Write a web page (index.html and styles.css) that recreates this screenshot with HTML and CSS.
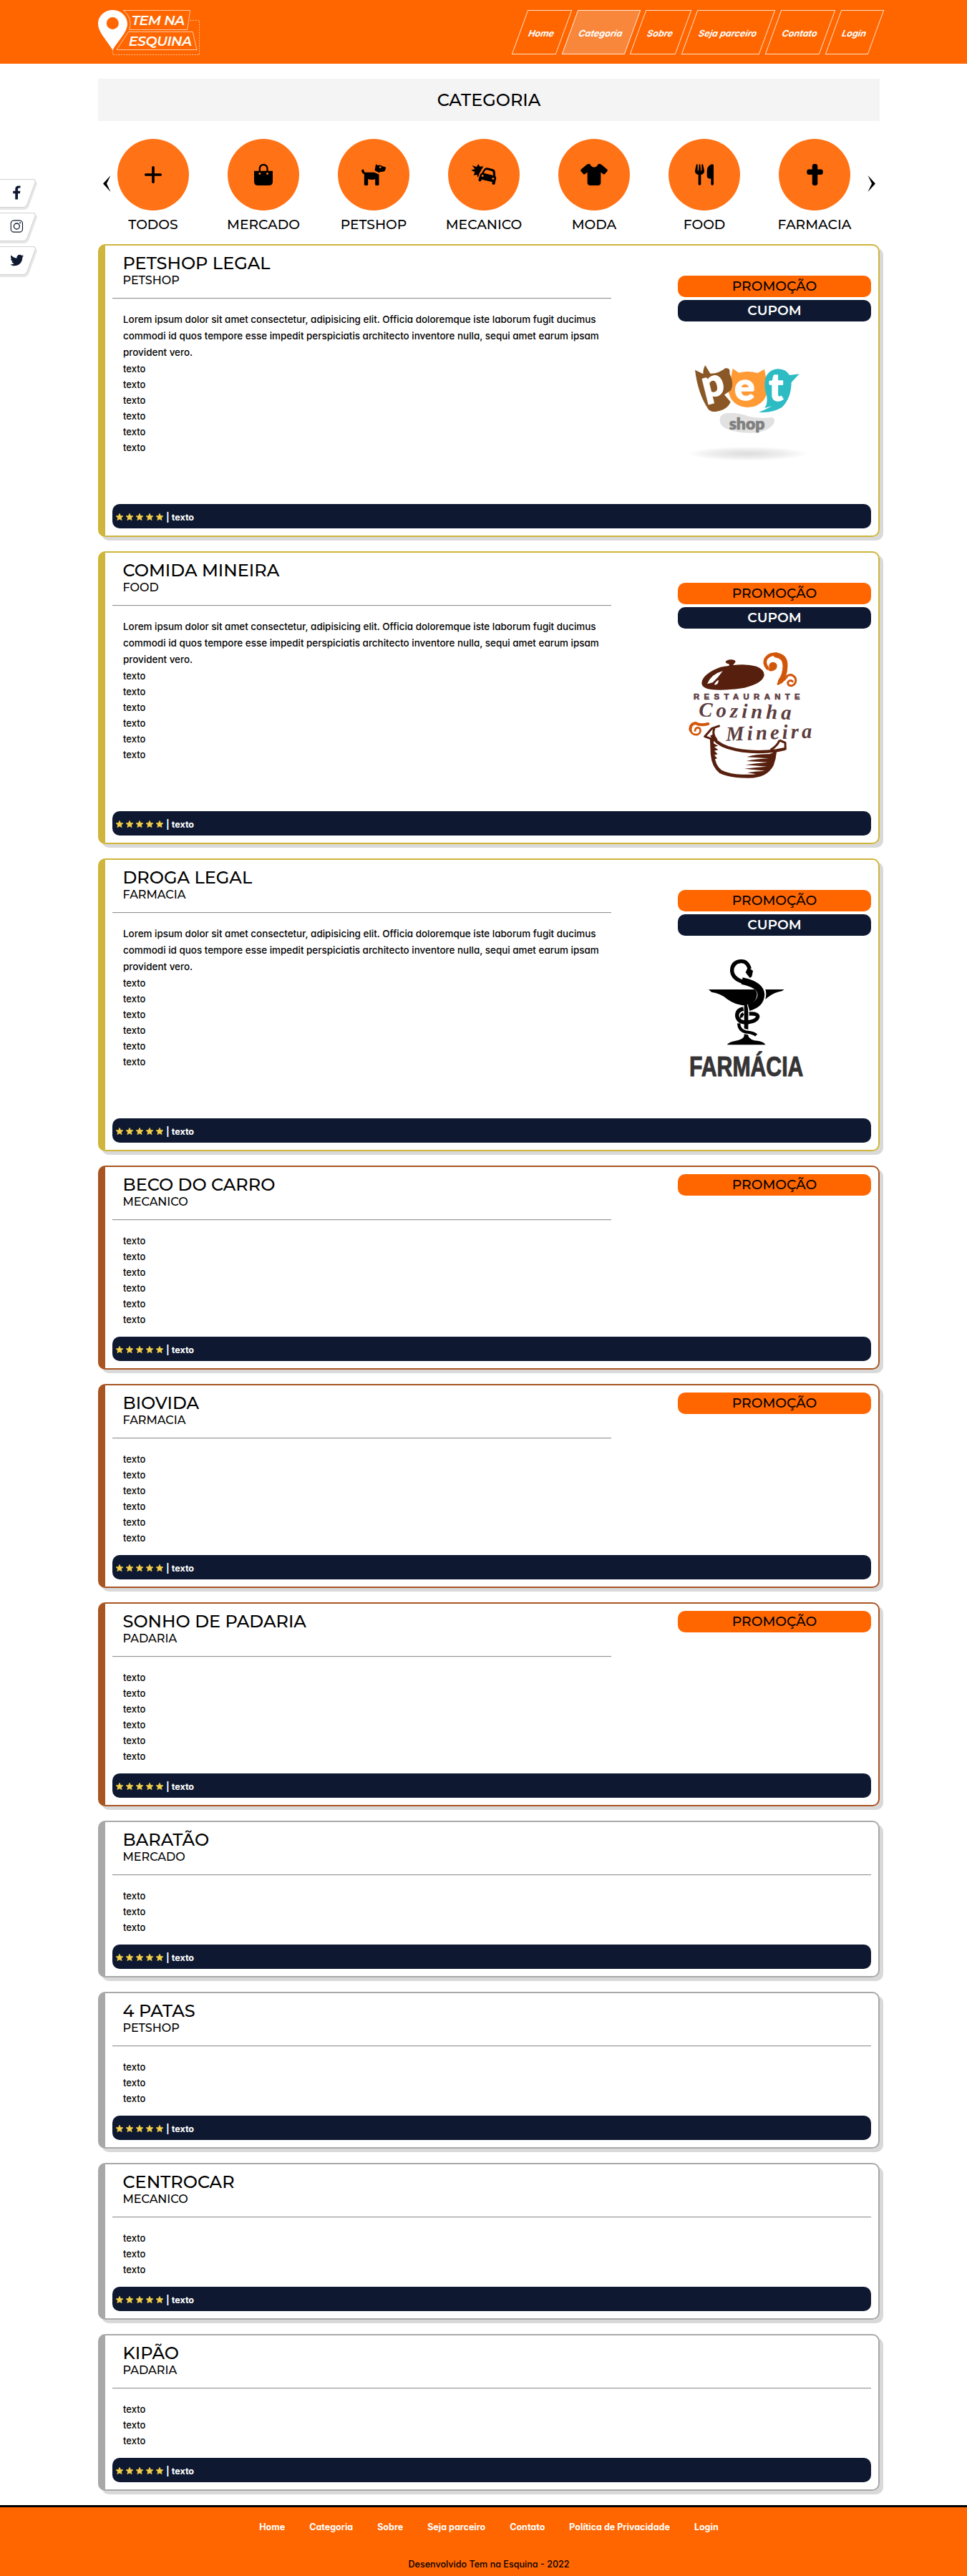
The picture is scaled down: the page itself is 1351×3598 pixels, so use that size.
FILE: index.html
```
<!DOCTYPE html>
<html lang="pt-BR">
<head>
<meta charset="utf-8">
<title>Tem na Esquina - Categoria</title>
<link rel="stylesheet" href="styles.css">
</head>
<body>
<svg class="defs" width="0" height="0">
  <symbol id="star" viewBox="1 1 22 21"><path d="M12 1l3.300 7 7.700.9-5.700 5.200 1.600 7.600L12 17.900l-6.900 3.800 1.600-7.600L1 8.900 8.700 8z" stroke="#f2cf4a" stroke-width="1.500" stroke-linejoin="round"/></symbol>
  <symbol id="stars" viewBox="0 0 70 12">
    <use href="#star" x="0" y="1" width="10" height="10"/><use href="#star" x="14" y="1" width="10" height="10"/><use href="#star" x="28" y="1" width="10" height="10"/><use href="#star" x="42" y="1" width="10" height="10"/><use href="#star" x="56" y="1" width="10" height="10"/>
  </symbol>
</svg>

<header class="header">
  <div class="header-inner">
    <svg class="logo" viewBox="411 42 432 192">
      <path fill="#fff" fill-rule="evenodd" d="M472 42c-34 0-61 26-61 58 0 34 34 66 61 110 27-44 62-76 62-110 0-32-28-58-62-58zM472 72a25.500 25.500 0 1 1 0 51 25.500 25.500 0 0 1 0-51z"/>
      <g fill="none" stroke="#fff" stroke-opacity=".75" stroke-width="2.500">
        <path d="M517 43.500H797L785 124.500H542Q558 75 517 43.500z"/>
        <path d="M538 133.500H808L825 208.500H489z"/>
        <path stroke-dasharray="6 5" d="M796 85.500H835.500V229.500H473V208"/>
      </g>
      <text x="551" y="105" textLength="224">TEM NA</text>
      <text x="539" y="192" textLength="266">ESQUINA</text>
    </svg>
    <nav class="nav">
      <a class="nav-home"><span>Home</span></a>
      <a class="nav-categoria active"><span>Categoria</span></a>
      <a class="nav-sobre"><span>Sobre</span></a>
      <a class="nav-parceiro"><span>Seja parceiro</span></a>
      <a class="nav-contato"><span>Contato</span></a>
      <a class="nav-login"><span>Login</span></a>
    </nav>
  </div>
</header>

<aside class="social">
  <a><svg width="12" height="20" viewBox="0 0 320 512"><path d="M279.140 288l14.220-92.660h-88.910v-60.130c0-25.350 12.420-50.060 52.240-50.060h40.420V6.260S260.430 0 225.360 0c-73.220 0-121.080 44.380-121.080 124.720v70.620H22.890V288h81.390v224h100.170V288z"/></svg></a>
  <a><svg width="18" height="18" viewBox="0 0 18 18"><g fill="none" stroke="#0e1831" stroke-width="1.300"><rect x=".8" y=".8" width="16.400" height="16.400" rx="4.500"/><circle cx="9" cy="9" r="4"/></g><circle cx="13.700" cy="4.300" r="1"/></svg></a>
  <a><svg width="19" height="19" viewBox="0 0 512 512"><path d="M459.370 151.716c.325 4.548.325 9.097.325 13.645 0 138.720-105.583 298.558-298.558 298.558-59.452 0-114.680-17.219-161.137-47.106 8.447.974 16.568 1.299 25.340 1.299 49.055 0 94.213-16.568 130.274-44.832-46.132-.975-84.792-31.188-98.112-72.772 6.498.974 12.995 1.624 19.818 1.624 9.421 0 18.843-1.300 27.614-3.573-48.081-9.747-84.143-51.980-84.143-102.985v-1.299c13.969 7.797 30.214 12.670 47.431 13.319-28.264-18.843-46.781-51.005-46.781-87.391 0-19.492 5.197-37.360 14.294-52.954 51.655 63.675 129.300 105.258 216.365 109.807-1.624-7.797-2.599-15.918-2.599-24.040 0-57.828 46.782-104.934 104.934-104.934 30.213 0 57.502 12.670 76.670 33.137 23.715-4.548 46.456-13.320 66.599-25.340-7.798 24.366-24.366 44.833-46.132 57.827 21.117-2.273 41.584-8.122 60.426-16.243-14.292 20.791-32.161 39.308-52.628 54.253z"/></svg></a>
</aside>

<main class="container">
  <h1 class="page-title">CATEGORIA</h1>

  <section class="carousel">
    <svg class="arrow prev" width="11" height="23" viewBox="0 0 11 23"><path d="M10.500 0L0 11.500 10.500 23 5 11.500z"/></svg>
    <a class="cat"><span class="disc"><svg width="26" height="30" viewBox="0 0 448 512"><path d="M256 80c0-17.700-14.300-32-32-32s-32 14.300-32 32V224H48c-17.700 0-32 14.300-32 32s14.300 32 32 32H192V432c0 17.700 14.300 32 32 32s32-14.300 32-32V288H400c17.700 0 32-14.300 32-32s-14.300-32-32-32H256V80z"/></svg></span><span class="cat-label">TODOS</span></a>
    <a class="cat"><span class="disc"><svg width="26" height="30" viewBox="0 0 78 90"><path fill-rule="evenodd" d="M0 29H20V20C20 8 28 0 39.500 0S59 8 59 20V29H78V74Q78 90 62 90H16Q0 90 0 74zM27 29H52V20C52 12 47 7 39.500 7S27 12 27 20zM23.500 36a4.500 4.500 0 1 0 .1 0zM55.500 36a4.500 4.500 0 1 0 .1 0z"/></svg></span><span class="cat-label">MERCADO</span></a>
    <a class="cat"><span class="disc"><svg width="34" height="30" viewBox="527 147 101 90"><path fill-rule="evenodd" d="M587 147L592 152H608L613 157 628 160V167Q626 180 612 180H606L600 184 582 174zM605 157a4 4 0 1 0 .1 0zM527 174Q529 168 535 170L540 182H580L600 191V233Q600 237 596 237H588Q584 237 584 233V211Q570 215 554 210V233Q554 237 550 237H542Q538 237 538 233V190Q527 186 527 174z"/></svg></span><span class="cat-label">PETSHOP</span></a>
    <a class="cat"><span class="disc"><svg width="36" height="30" viewBox="983 147 107 90"><path fill-rule="evenodd" d="M1013 147L1020 158 1035 157 1028 168 1018 186 1012 205 1007 192 993 194 999 181 983 173 999 168 987 153 1006 160zM1038 168Q1044 161 1052 163L1075 169Q1084 172 1084 181L1085 199Q1089 203 1088 208L1083 230Q1082 234 1077 234 1070 233 1071 228L1072 223 1027 212 1026 217Q1024 221 1019 220 1013 219 1014 213L1020 193Q1021 188 1027 186zM1043 173L1036 185 1076 195 1074 181Q1073 178 1070 177L1050 172Q1046 171 1043 173zM1031 192a4.500 4.500 0 1 0 .1 0zM1075 204a4.500 4.500 0 1 0 .1 0z"/></svg></span><span class="cat-label">MECANICO</span></a>
    <a class="cat"><span class="disc"><svg width="38" height="30" viewBox="0 0 640 512"><path d="M211.800 0c7.800 0 14.300 5.700 16.700 13.200C240.800 51.900 277.100 80 320 80s79.200-28.100 91.500-66.800C413.900 5.700 420.400 0 428.200 0h12.600c22.500 0 44.200 7.900 61.500 22.300L628.500 127.400c6.600 5.500 10.700 13.500 11.400 22.100s-2.100 17.100-7.800 23.600l-56 64c-11.400 13.100-31.200 14.600-44.600 3.500L480 197.700V448c0 35.300-28.700 64-64 64H224c-35.300 0-64-28.700-64-64V197.700l-51.500 42.900c-13.300 11.100-33.100 9.600-44.600-3.500l-56-64c-5.700-6.500-8.500-15-7.800-23.600s4.800-16.600 11.400-22.100L137.700 22.300C155 7.900 176.700 0 199.200 0h12.600z"/></svg></span><span class="cat-label">MODA</span></a>
    <a class="cat"><span class="disc"><svg width="26" height="30" viewBox="0 0 448 512"><path d="M416 0C400 0 288 32 288 176V288c0 35.300 28.700 64 64 64h32V480c0 17.700 14.300 32 32 32s32-14.300 32-32V352 240 32c0-17.700-14.300-32-32-32zM64 16C64 7.800 57.900 1 49.700 .1S34.200 4.600 32.400 12.500L2.100 148.800C.7 155.100 0 161.500 0 167.900c0 45.900 35.100 83.600 80 87.700V480c0 17.700 14.300 32 32 32s32-14.300 32-32V255.600c44.900-4.100 80-41.800 80-87.700c0-6.400-.7-12.800-2.100-19.100L191.600 12.500c-1.800-8-9.300-13.300-17.400-12.400S160 7.800 160 16V150.200c0 5.400-4.400 9.800-9.800 9.800c-5.100 0-9.300-3.900-9.800-9L127.900 14.600C127.200 6.300 120.300 0 112 0s-15.200 6.300-15.900 14.600L83.700 151c-.5 5.100-4.700 9-9.800 9c-5.400 0-9.800-4.400-9.800-9.800V16z"/></svg></span><span class="cat-label">FOOD</span></a>
    <a class="cat"><span class="disc"><svg width="23" height="30" viewBox="0 0 384 512"><path d="M176 0c-26.500 0-48 21.500-48 48v80H48c-26.500 0-48 21.500-48 48v32c0 26.500 21.500 48 48 48h80V464c0 26.500 21.500 48 48 48h32c26.500 0 48-21.500 48-48V256h80c26.500 0 48-21.500 48-48V176c0-26.500-21.500-48-48-48H256V48c0-26.500-21.500-48-48-48H176z"/></svg></span><span class="cat-label">FARMACIA</span></a>
    <svg class="arrow next" width="11" height="23" viewBox="0 0 11 23"><path d="M.5 0L11 11.500.5 23 6 11.500z"/></svg>
  </section>

  <article class="card gold">
    <div class="card-body">
      <div class="info">
        <h2>PETSHOP LEGAL</h2><h3>PETSHOP</h3><hr>
        <p>Lorem ipsum dolor sit amet consectetur, adipisicing elit. Officia doloremque iste laborum fugit ducimus<br>commodi id quos tempore esse impedit perspiciatis architecto inventore nulla, sequi amet earum ipsam<br>provident vero.</p>
        <ul><li>texto</li><li>texto</li><li>texto</li><li>texto</li><li>texto</li><li>texto</li></ul>
      </div>
      <div class="side">
        <span class="tag promo">PROMOÇÃO</span><span class="tag cupom">CUPOM</span>
        <svg class="brand" viewBox="321 372 810 720">
          <defs><radialGradient id="shade"><stop offset="0" stop-color="#dcdcdc"/><stop offset=".6" stop-color="#eee"/><stop offset="1" stop-color="#fff"/></radialGradient></defs>
          <ellipse cx="613" cy="911" rx="252" ry="30" fill="url(#shade)"/>
          <path fill="#ff9a35" d="M551 554L577 572Q614 561 655 573L684 557 690 590Q708 650 680 688 655 717 613 717 570 716 546 684 520 640 543 595z"/>
          <path fill="#8a5826" d="M393 560L427 577Q427 552 436 541L457 575Q490 577 520 553 542 550 538 575 558 620 543 646L516 664 542 694Q530 728 480 735 459 736 449 725 405 660 393 560z"/>
          <path fill="#2dbbc4" d="M742 556Q775 557 789 582L830 577 797 612Q796 680 757 717 716 742 660 737 690 727 715 711L684 720Q698 705 694 672 680 630 688 595 702 557 742 556z"/>
          <g class="pet-letters"><text x="427" y="668" transform="rotate(-14 480 640)">p</text><text x="558" y="688">e</text><text x="703" y="689">t</text></g>
          <path fill="#e1e1e1" d="M497 765Q500 740 540 740 580 740 620 755 670 765 715 758 735 765 720 790 690 825 620 824 545 822 510 798 496 785 497 765z"/>
          <text class="pet-shop" x="536" y="810" textLength="149" lengthAdjust="spacingAndGlyphs">shop</text>
        </svg>
      </div>
    </div>
    <div class="rating"><svg class="stars" width="70" height="12"><use href="#stars"/></svg><span>| texto</span></div>
  </article>

  <article class="card gold">
    <div class="card-body">
      <div class="info">
        <h2>COMIDA MINEIRA</h2><h3>FOOD</h3><hr>
        <p>Lorem ipsum dolor sit amet consectetur, adipisicing elit. Officia doloremque iste laborum fugit ducimus<br>commodi id quos tempore esse impedit perspiciatis architecto inventore nulla, sequi amet earum ipsam<br>provident vero.</p>
        <ul><li>texto</li><li>texto</li><li>texto</li><li>texto</li><li>texto</li><li>texto</li></ul>
      </div>
      <div class="side">
        <span class="tag promo">PROMOÇÃO</span><span class="tag cupom">CUPOM</span>
        <svg class="brand" viewBox="321 369 810 720">
          <path fill="#571f0d" d="M421 585Q420 555 470 528 500 512 535 510L537 503Q520 500 521 492 530 482 548 484 565 486 562 495L552 507Q610 500 650 512 684 525 683 550 675 585 600 602 520 615 460 609 425 605 421 585z"/>
          <path fill="#fff" d="M509 532Q460 545 444 586L467 580Q490 560 509 532zM492 569Q478 575 474 589 490 592 492 569z"/>
          <g fill="none" stroke="#d2560a" stroke-linecap="round">
            <path stroke-width="14" d="M697 520Q680 500 690 480 705 459 735 461"/>
            <path stroke-width="21" d="M733 465Q772 470 771 510 770 550 752 573"/>
            <path stroke-width="9" d="M742 586Q775 565 780 552 800 540 814 562 820 585 800 593 782 595 782 580 788 566 802 575"/>
            <path stroke-width="12" d="M448 753Q415 762 395 750 370 755 374 780"/><path stroke-width="8" d="M372 772Q376 802 404 798 422 788 412 771 396 764 393 782"/>
          </g>
          <circle cx="720" cy="511" r="17" fill="#d2560a"/><path fill="#d2560a" d="M735 588L755 550 768 565zM700 528Q715 540 736 520L710 510z"/>
          <text class="rest" x="387" y="650" textLength="446">RESTAURANTE</text>
          <text class="script" x="409" y="728" textLength="388" transform="rotate(2 600 700)">Cozinha</text>
          <text class="script" x="523" y="818" textLength="360" transform="rotate(-2 700 800)">Mineira</text>
          <g fill="none" stroke="#571f0d" stroke-linejoin="round">
            <path stroke-width="15" d="M463 812L466 880Q470 930 500 953 540 974 620 973 690 972 715 925 725 900 728 868"/>
            <path stroke-width="13" d="M462 800Q480 835 530 852 620 880 735 865L770 858"/>
            <path stroke-width="9" d="M497 761L464 772 434 806 480 823M474 773Q463 796 484 820M747 822L771 832 772 862M747 822Q738 846 710 862"/>
          </g>
          <path fill="#571f0d" d="M705 880Q650 879 610 892L702 898Q650 900 608 909L698 914Q650 918 605 925L694 932Q650 935 600 941L690 950Q650 950 612 958L680 968 722 925 730 870zM470 835L490 845 474 850 490 862 474 866 488 880 474 884 486 898 472 902z"/>
        </svg>
      </div>
    </div>
    <div class="rating"><svg class="stars" width="70" height="12"><use href="#stars"/></svg><span>| texto</span></div>
  </article>

  <article class="card gold">
    <div class="card-body">
      <div class="info">
        <h2>DROGA LEGAL</h2><h3>FARMACIA</h3><hr>
        <p>Lorem ipsum dolor sit amet consectetur, adipisicing elit. Officia doloremque iste laborum fugit ducimus<br>commodi id quos tempore esse impedit perspiciatis architecto inventore nulla, sequi amet earum ipsam<br>provident vero.</p>
        <ul><li>texto</li><li>texto</li><li>texto</li><li>texto</li><li>texto</li><li>texto</li></ul>
      </div>
      <div class="side">
        <span class="tag promo">PROMOÇÃO</span><span class="tag cupom">CUPOM</span>
        <svg class="brand" viewBox="321 396 810 720">
          <path d="M450 606H767L757 613Q725 618 697 640 665 674 608 674 560 672 526 645 500 622 462 617zM599 670H616V800Q620 818 660 822 685 828 688 838H528Q532 828 560 822 597 815 599 800z"/>
          <g fill="none" stroke-linecap="butt">
            <path stroke="#fff" stroke-width="38" d="M590 566Q672 582 672 625 670 678 615 688"/>
            <path stroke="#000" stroke-width="16" d="M622 520Q612 485 584 488 548 492 548 528 550 562 600 576"/>
            <path stroke="#000" stroke-width="29" d="M590 570Q669 586 670 628 668 668 618 682"/>
            <path stroke="#000" stroke-width="16" d="M596 687Q568 692 569 717 574 746 613 744 656 738 656 718 654 706 620 708"/>
            <path stroke="#000" stroke-width="12" d="M596 707Q584 715 588 724"/>
            <path stroke="#fff" stroke-width="22" d="M574 756Q584 782 612 784L630 787"/>
            <path stroke="#000" stroke-width="13" d="M576 748Q578 778 606 784 638 787 650 798"/>
          </g>
          <path d="M615 512L636 528 631 552 623 558 605 535z"/>
          <text class="farm" x="369" y="970" textLength="478" lengthAdjust="spacingAndGlyphs">FARMÁCIA</text>
        </svg>
      </div>
    </div>
    <div class="rating"><svg class="stars" width="70" height="12"><use href="#stars"/></svg><span>| texto</span></div>
  </article>

  <article class="card bronze">
    <div class="card-body">
      <div class="info"><h2>BECO DO CARRO</h2><h3>MECANICO</h3><hr>
        <ul><li>texto</li><li>texto</li><li>texto</li><li>texto</li><li>texto</li><li>texto</li></ul></div>
      <div class="side"><span class="tag promo">PROMOÇÃO</span></div>
    </div>
    <div class="rating"><svg class="stars" width="70" height="12"><use href="#stars"/></svg><span>| texto</span></div>
  </article>

  <article class="card bronze">
    <div class="card-body">
      <div class="info"><h2>BIOVIDA</h2><h3>FARMACIA</h3><hr>
        <ul><li>texto</li><li>texto</li><li>texto</li><li>texto</li><li>texto</li><li>texto</li></ul></div>
      <div class="side"><span class="tag promo">PROMOÇÃO</span></div>
    </div>
    <div class="rating"><svg class="stars" width="70" height="12"><use href="#stars"/></svg><span>| texto</span></div>
  </article>

  <article class="card bronze">
    <div class="card-body">
      <div class="info"><h2>SONHO DE PADARIA</h2><h3>PADARIA</h3><hr>
        <ul><li>texto</li><li>texto</li><li>texto</li><li>texto</li><li>texto</li><li>texto</li></ul></div>
      <div class="side"><span class="tag promo">PROMOÇÃO</span></div>
    </div>
    <div class="rating"><svg class="stars" width="70" height="12"><use href="#stars"/></svg><span>| texto</span></div>
  </article>

  <article class="card silver">
    <div class="card-body"><div class="info"><h2>BARATÃO</h2><h3>MERCADO</h3><hr>
      <ul><li>texto</li><li>texto</li><li>texto</li></ul></div></div>
    <div class="rating"><svg class="stars" width="70" height="12"><use href="#stars"/></svg><span>| texto</span></div>
  </article>

  <article class="card silver">
    <div class="card-body"><div class="info"><h2>4 PATAS</h2><h3>PETSHOP</h3><hr>
      <ul><li>texto</li><li>texto</li><li>texto</li></ul></div></div>
    <div class="rating"><svg class="stars" width="70" height="12"><use href="#stars"/></svg><span>| texto</span></div>
  </article>

  <article class="card silver">
    <div class="card-body"><div class="info"><h2>CENTROCAR</h2><h3>MECANICO</h3><hr>
      <ul><li>texto</li><li>texto</li><li>texto</li></ul></div></div>
    <div class="rating"><svg class="stars" width="70" height="12"><use href="#stars"/></svg><span>| texto</span></div>
  </article>

  <article class="card silver">
    <div class="card-body"><div class="info"><h2>KIPÃO</h2><h3>PADARIA</h3><hr>
      <ul><li>texto</li><li>texto</li><li>texto</li></ul></div></div>
    <div class="rating"><svg class="stars" width="70" height="12"><use href="#stars"/></svg><span>| texto</span></div>
  </article>
</main>

<footer class="footer">
  <nav class="footer-nav"><a>Home</a><a>Categoria</a><a>Sobre</a><a>Seja parceiro</a><a>Contato</a><a>Política de Privacidade</a><a>Login</a></nav>
  <p>Desenvolvido Tem na Esquina - 2022</p>
</footer>
</body>
</html>
```
FILE: styles.css
```
* { box-sizing: border-box; margin: 0; padding: 0; }
body { background: #fff; color: #000; font-family: Inter, sans-serif; font-feature-settings: "cv11"; overflow-x: hidden; }
.defs { position: absolute; }
.container { width: 1092px; margin-left: 137px; }

/* header */
.header { background: #ff6600; height: 89px; }
.header-inner { width: 1092px; margin-left: 137px; padding: 14px 5px 0 0; display: flex; justify-content: space-between; align-items: flex-start; }
.logo { width: 144px; height: 64px; }
.logo text { font: italic 600 57px Montserrat, Lato, sans-serif; fill: #fff; }
.nav { display: flex; gap: 8px; }
.nav a { height: 62px; border: 1px solid rgba(255, 255, 255, .8); transform: skewX(-20deg); display: flex; align-items: center; justify-content: center; color: #fff; font-size: 12.5px; font-weight: 700; padding-top: 3px; }
.nav .active { background: #f8873c; }
.nav-home { width: 62px; }
.nav-categoria { width: 87.5px; }
.nav-sobre { width: 64px; }
.nav-parceiro { width: 109px; }
.nav-contato { width: 76px; }
.nav-login { width: 60px; }

/* social tabs pinned to the left edge */
.social { position: absolute; left: -20px; top: 250px; display: flex; flex-direction: column; gap: 7px; }
.social a { width: 64px; height: 40px; padding-left: 22px; border: 1px solid #d2d2d2; border-radius: 5px; background: #fff; box-shadow: 3px 3px 0 #e6e6e6; transform: skewX(-20deg); display: flex; align-items: center; justify-content: center; }
.social svg { transform: skewX(20deg); fill: #0e1831; margin-top: -2px; }

/* title and categories */
.page-title { margin-top: 21px; height: 59px; background: #f4f4f4; font: 500 24px/59px Montserrat, Lato, sans-serif; text-align: center; }
.carousel { position: relative; display: flex; padding-top: 25px; height: 172px; }
.cat { width: 154px; display: flex; flex-direction: column; align-items: center; }
.disc { width: 100px; height: 100px; border-radius: 50%; background: #ff7216; display: flex; align-items: center; justify-content: center; }
.cat-label { margin-top: 5px; font: 500 18.72px/30px Montserrat, Lato, sans-serif; }
.arrow { position: absolute; top: 76px; }
.prev { left: 7px; }
.next { right: 6px; }

/* cards */
.card { border: 2px solid; border-left-width: 10px; border-radius: 10px; padding: 10px; margin-bottom: 20px; box-shadow: 5px 5px 0 #d9d9d9; }
.gold { border-color: #cfb53b; }
.bronze { border-color: #a95522; }
.silver { border-color: #a8a8a8; }
.card-body { display: flex; justify-content: space-between; min-height: 161px; }
.bronze .card-body { min-height: 227px; }
.gold .card-body { min-height: 351px; }
.info { width: 697px; }
.silver .info { width: 100%; }
.info h2 { font: 500 24px/29px Montserrat, Lato, sans-serif; padding-left: 14.5px; }
.info h3 { font: 500 16px/20px Montserrat, Lato, sans-serif; padding-left: 14.5px; }
.info hr { height: 2px; border: 0; border-top: 1px solid #939393; border-bottom: 1px solid #f0f0f0; margin: 14px 0 17px; }
.info p { font-size: 13.45px; font-weight: 500; line-height: 23px; padding-left: 15px; white-space: nowrap; }
.info ul { list-style: none; padding-left: 15px; }
.info li { font-size: 13px; font-weight: 500; line-height: 22px; }
.side { width: 270px; display: flex; flex-direction: column; }
.gold .side { padding-top: 32px; }
.tag { height: 30px; border-radius: 10px; text-align: center; font: 500 18.72px/30px Montserrat, Lato, sans-serif; }
.promo { background: #ff6600; }
.cupom { margin-top: 4px; background: #0e1831; color: #fff; font-weight: 600; }
.rating { height: 34px; border-radius: 10px; background: #0e1831; color: #fff; font-size: 12.6px; font-weight: 700; display: flex; align-items: center; padding: 3px 0 0 5px; }
.stars { fill: #f2cf4a; margin-top: -1px; }

/* brand pictures */
.brand { width: 270px; height: 240px; margin-top: 5px; }
.pet-letters { font: 900 160px Lato, sans-serif; fill: #fff; stroke: #fff; stroke-width: 4px; stroke-linejoin: round; }
.pet-shop { font: 800 70px Lato, sans-serif; fill: #808080; stroke: #808080; stroke-width: 2px; }
.rest { font: 700 34px "Liberation Sans", sans-serif; fill: #604044; stroke: #604044; stroke-width: 2px; }
.script { font: italic 700 86px "Liberation Serif", serif; fill: #5c3d3d; }
.farm { font: 700 118px "Liberation Sans", sans-serif; fill: #353334; stroke: #353334; stroke-width: 3px; }

/* footer */
.footer { margin-top: 20px; border-top: 3px solid #000; background: #ff6600; height: 99px; padding: 18px 0 0 15px; text-align: center; }
.footer-nav { display: flex; justify-content: center; gap: 34px; color: #fff; font-size: 12.5px; font-weight: 700; line-height: 20px; }
.footer p { margin-top: 32px; font-size: 12.6px; font-weight: 500; line-height: 20px; }
```
